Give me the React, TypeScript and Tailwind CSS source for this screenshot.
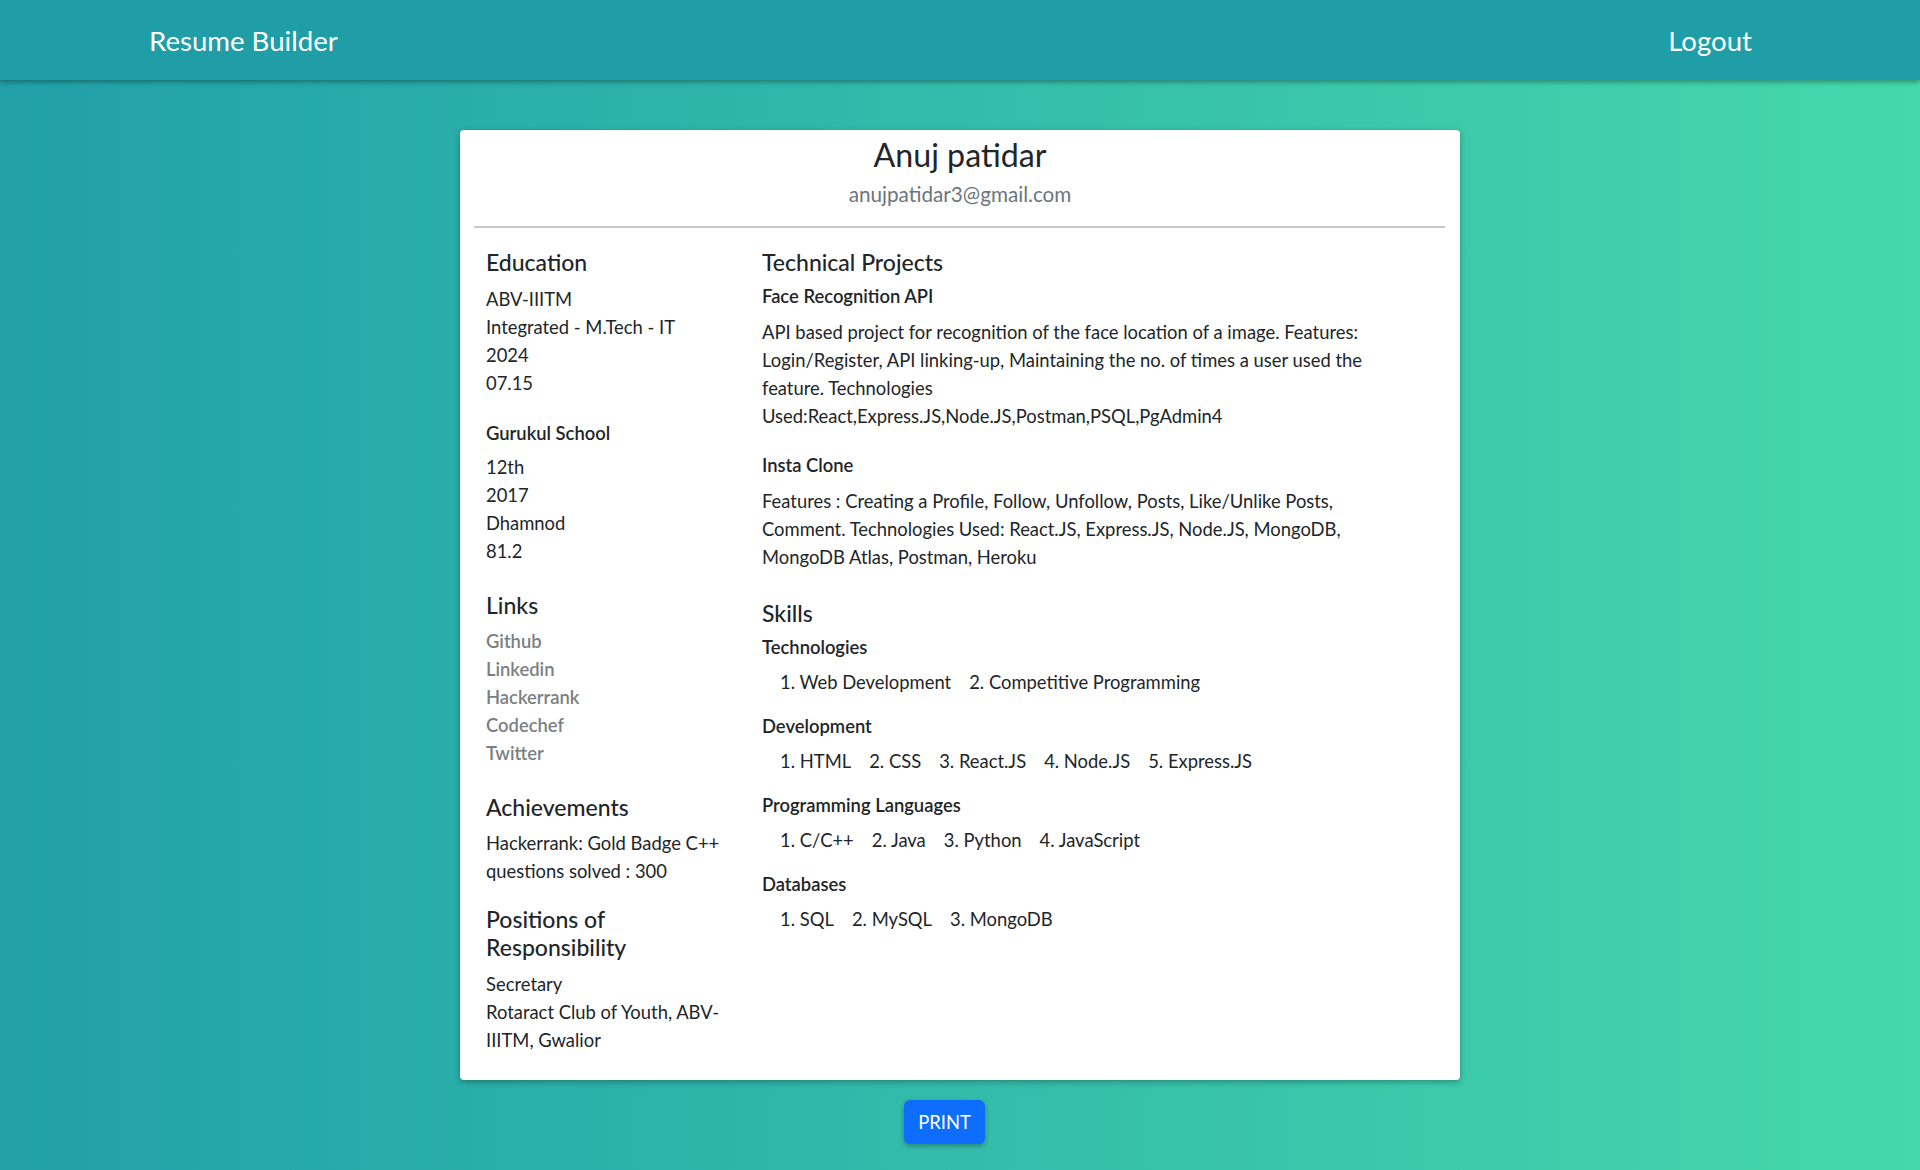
import React from 'react';

const education = [
  { school: null, lines: ['ABV-IIITM', 'Integrated - M.Tech - IT', '2024', '07.15'] },
  { school: 'Gurukul School', lines: ['12th', '2017', 'Dhamnod', '81.2'] },
];

const links = ['Github', 'Linkedin', 'Hackerrank', 'Codechef', 'Twitter'];

const projects = [
  {
    title: 'Face Recognition API',
    text: 'API based project for recognition of the face location of a image. Features: Login/Register, API linking-up, Maintaining the no. of times a user used the feature. Technologies Used:React,Express.JS,Node.JS,Postman,PSQL,PgAdmin4',
  },
  {
    title: 'Insta Clone',
    text: 'Features : Creating a Profile, Follow, Unfollow, Posts, Like/Unlike Posts, Comment. Technologies Used: React.JS, Express.JS, Node.JS, MongoDB, MongoDB Atlas, Postman, Heroku',
  },
];

const skills = [
  { title: 'Technologies', items: ['Web Development', 'Competitive Programming'] },
  { title: 'Development', items: ['HTML', 'CSS', 'React.JS', 'Node.JS', 'Express.JS'] },
  { title: 'Programming Languages', items: ['C/C++', 'Java', 'Python', 'JavaScript'] },
  { title: 'Databases', items: ['SQL', 'MySQL', 'MongoDB'] },
];

const SectionTitle = ({ children }: { children: React.ReactNode }) => (
  <h5 className="text-[23px] leading-[28px] font-medium text-[#212529] mb-[9px]">{children}</h5>
);

const SubTitle = ({ children }: { children: React.ReactNode }) => (
  <h6 className="text-[18.4px] leading-[22px] font-semibold text-[#212529] mb-[9px]">{children}</h6>
);

export default function App() {
  return (
    <div
      className="min-h-[1170px] bg-gradient-to-r from-[#21a0a8] to-[#45d8ab] text-[#212529] text-[18.4px] leading-[28px]"
      style={{ fontFamily: 'Lato, "Open Sans", sans-serif' }}
    >
      {/* navbar */}
      <header className="h-[80px] bg-[#209ea7] flex items-center justify-between pl-[149px] pr-[168px] shadow-[0_2px_5px_rgba(0,0,0,0.35)]">
        <span className="text-white text-[27.6px] leading-none mt-[2px]">Resume Builder</span>
        <span className="text-white text-[27.6px] leading-none mt-[2px]">Logout</span>
      </header>

      <main className="flex flex-col items-center pt-[50px]">
        <div className="w-[1000px] bg-white rounded-[4px] shadow-[0_2px_6px_rgba(0,0,0,0.3)] px-[14px] pt-[6px] pb-[26px]">
          <div className="text-center">
            <h3 className="text-[32.2px] leading-[38.6px] text-[#212529]">Anuj patidar</h3>
            <p className="text-[20.7px] leading-[28px] text-[#6c757d] mt-[5px]">anujpatidar3@gmail.com</p>
          </div>
          <hr className="mt-[18px] border-0 h-[2px] bg-[#c8c8c8] mr-[1px]" />

          <div className="flex mt-[20px]">
            {/* left column */}
            <div className="w-[288px] shrink-0 pl-[12px] pr-[30px]">
              <SectionTitle>Education</SectionTitle>
              {education.map((e, i) => (
                <div key={i} className={i > 0 ? 'mt-[25px]' : ''}>
                  {e.school && <SubTitle>{e.school}</SubTitle>}
                  {e.lines.map((l) => (
                    <div key={l}>{l}</div>
                  ))}
                </div>
              ))}

              <div className="mt-[26px]">
                <SectionTitle>Links</SectionTitle>
                <div className="-mt-[1px]">
                  {links.map((l) => (
                    <div key={l} className="font-semibold text-[#7b7f83]">{l}</div>
                  ))}
                </div>
              </div>

              <div className="mt-[26px]">
                <SectionTitle>Achievements</SectionTitle>
                <div className="-mt-[1px]">Hackerrank: Gold Badge C++ questions solved : 300</div>
              </div>

              <div className="mt-[20px]">
                <SectionTitle>Positions of Responsibility</SectionTitle>
                <div>Secretary</div>
                <div>Rotaract Club of Youth, ABV-IIITM, Gwalior</div>
              </div>
            </div>

            {/* right column */}
            <div className="w-[625px] shrink-0">
              <SectionTitle>Technical Projects</SectionTitle>
              {projects.map((p, i) => (
                <div key={p.title} className={i > 0 ? 'mt-[24px]' : ''}>
                  <SubTitle>{p.title}</SubTitle>
                  <p className="mt-[11px]">{p.text}</p>
                </div>
              ))}

              <div className="mt-[28px]">
                <SectionTitle>Skills</SectionTitle>
                {skills.map((s, i) => (
                  <div key={s.title} className={i > 0 ? 'mt-[19px]' : ''}>
                    <SubTitle>{s.title}</SubTitle>
                    <ol className="flex gap-[18px] pl-[18px] mt-[10px]">
                      {s.items.map((it, j) => (
                        <li key={it}>{j + 1}. {it}</li>
                      ))}
                    </ol>
                  </div>
                ))}
              </div>
            </div>
          </div>
        </div>

        <div className="flex justify-center pr-[31px] mt-[20px]">
          <button className="h-[44px] px-[14px] bg-[#0d6efd] text-white text-[18.4px] rounded-[6px] shadow-[0_2px_5px_rgba(0,0,0,0.3)]">
            PRINT
          </button>
        </div>
      </main>
    </div>
  );
}
